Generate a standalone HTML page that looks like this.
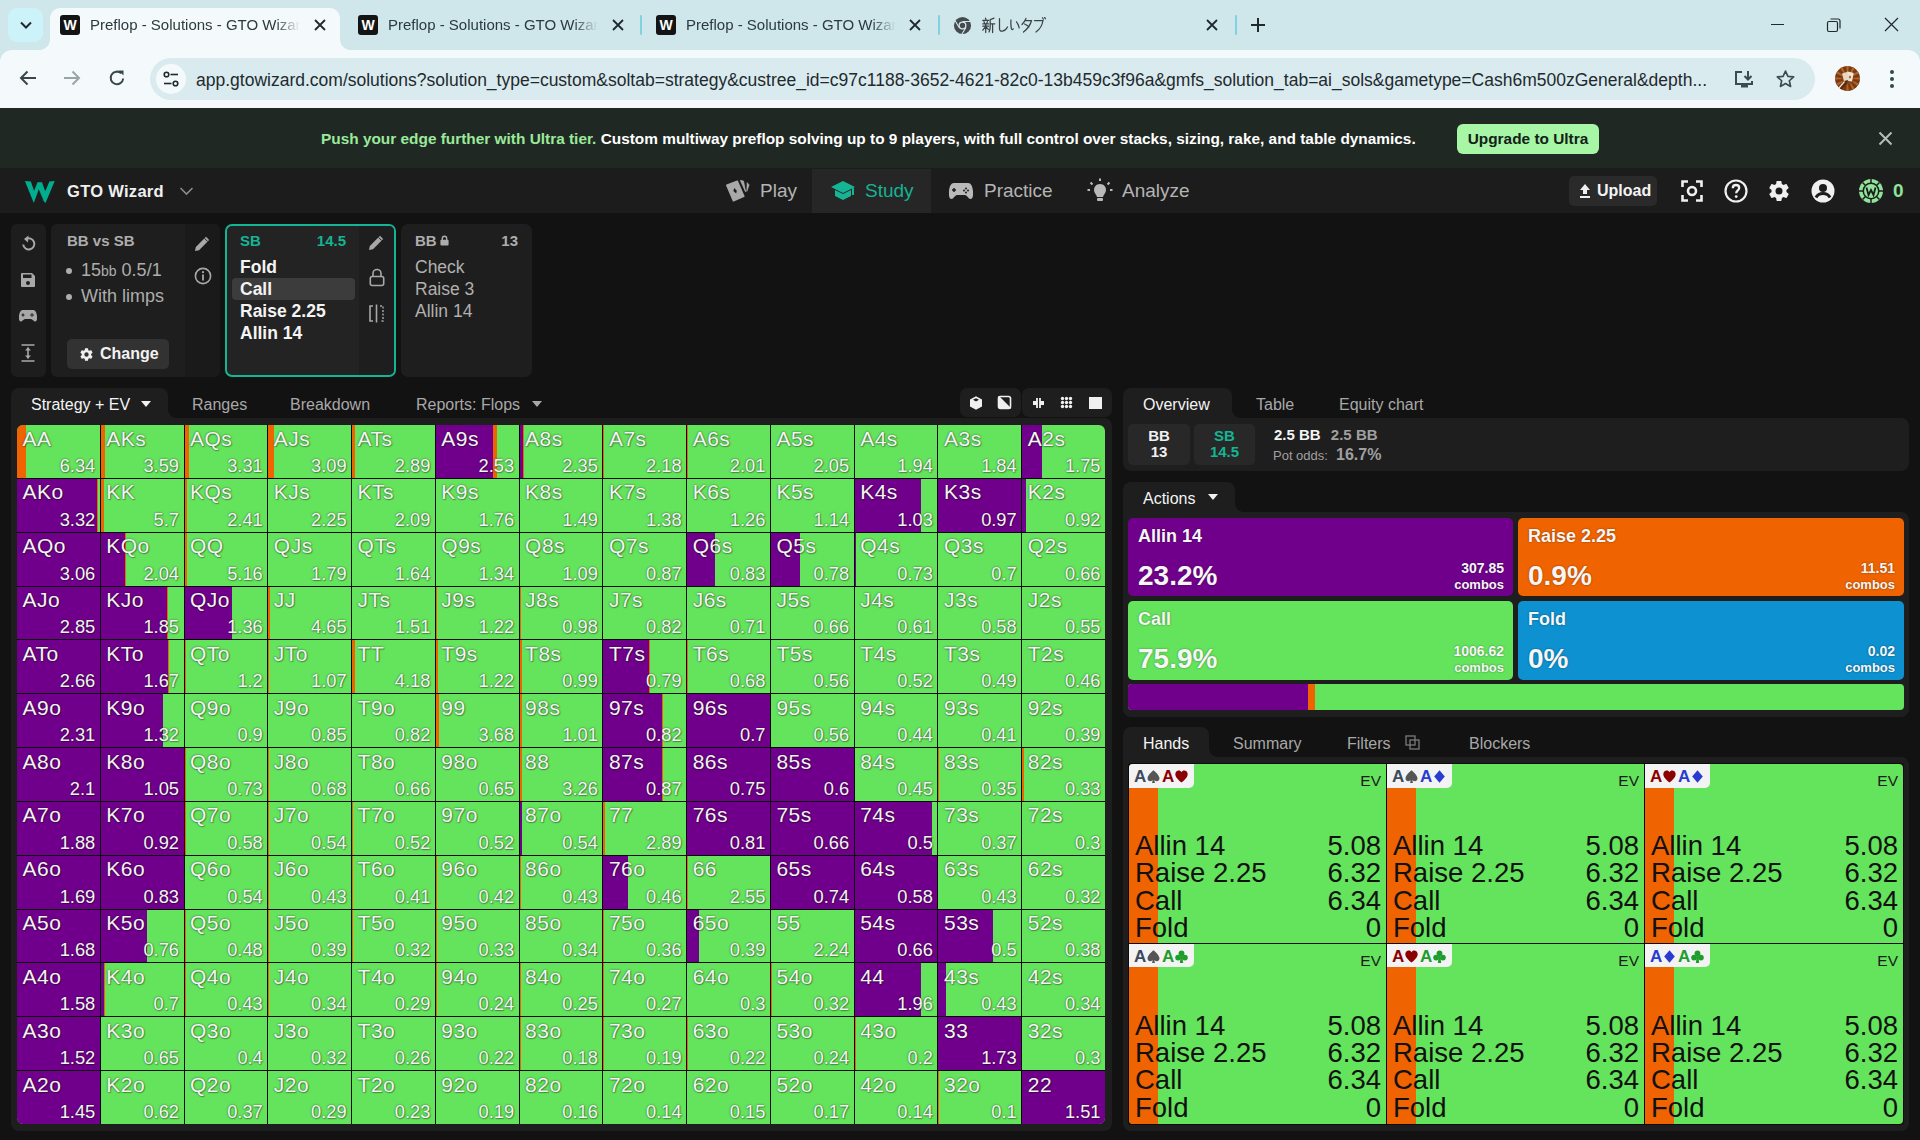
<!DOCTYPE html>
<html><head><meta charset="utf-8">
<style>
*{box-sizing:border-box;margin:0;padding:0}
html,body{width:1920px;height:1140px;overflow:hidden;background:#121212;font-family:"Liberation Sans",sans-serif}
.a{position:absolute}
svg{display:block}
/* chrome */
#tabbar{left:0;top:0;width:1920px;height:64px;background:#cfe6ea}
#toolbar{left:0;top:50px;width:1920px;height:58px;background:#f4fafb}
.tabt{font-size:15px;color:#2b3a3f;white-space:nowrap;overflow:hidden}
#banner{left:0;top:108px;width:1920px;height:60px;background:#1f2822}
#nav{left:0;top:168px;width:1920px;height:45px;background:#1c1c1c}
.navt{font-size:19px;color:#b4b4b4;top:178px;line-height:26px}
.panel{background:#1e1e1e}
/* grid */
#grid{left:17px;top:425px;width:1088px;height:699px;background:#0b0b0b;display:grid;grid-template-columns:repeat(13,1fr);grid-template-rows:repeat(13,1fr);gap:1px;border-radius:6px;overflow:hidden}
.c{position:relative;background:#64e35c;overflow:hidden}
.c i{position:absolute;top:0;bottom:0;left:0}
.c .p{background:#70008b}
.c .o{background:#ef6300}
.c b{position:absolute;left:5.5px;top:0.5px;font-weight:normal;font-size:21px;letter-spacing:0.5px;color:#f4f4f4;text-shadow:0 0 2px rgba(0,0,0,.6),1px 1px 1px rgba(0,0,0,.25);line-height:26px}
.c u{position:absolute;right:4.5px;bottom:1px;text-decoration:none;font-size:18.3px;letter-spacing:0;color:#f4f4f4;text-shadow:0 0 2px rgba(0,0,0,.6),1px 1px 1px rgba(0,0,0,.25);line-height:22px}
</style></head><body>
<div id="tabbar" class="a"></div>
<!-- tab dropdown -->
<div class="a" style="left:8px;top:8px;width:35px;height:34px;border-radius:9px;background:#cdf3fa"></div>
<svg class="a" style="left:19px;top:19px" width="14" height="12" viewBox="0 0 14 12"><path d="M2 3.5 L7 8.5 L12 3.5" stroke="#1f2a2e" stroke-width="2" fill="none"/></svg>
<!-- active tab -->
<div class="a" style="left:50px;top:8px;width:290px;height:44px;background:#f4fafb;border-radius:10px 10px 0 0"></div>
<div class="a" style="left:40px;top:40px;width:10px;height:10px;background:radial-gradient(circle at 0 0,#cfe6ea 9.5px,#f4fafb 10px)"></div>
<div class="a" style="left:340px;top:40px;width:10px;height:10px;background:radial-gradient(circle at 100% 0,#cfe6ea 9.5px,#f4fafb 10px)"></div>
<!-- favicons -->
<div class="a" style="left:60px;top:15px;width:20px;height:20px;background:#141414;border-radius:3px;color:#fff;font:bold 14px 'Liberation Sans';text-align:center;line-height:20px">W</div>
<div class="a" style="left:358px;top:15px;width:20px;height:20px;background:#141414;border-radius:3px;color:#fff;font:bold 14px 'Liberation Sans';text-align:center;line-height:20px">W</div>
<div class="a" style="left:656px;top:15px;width:20px;height:20px;background:#141414;border-radius:3px;color:#fff;font:bold 14px 'Liberation Sans';text-align:center;line-height:20px">W</div>
<div class="a tabt" style="left:90px;top:15px;width:210px;line-height:20px;-webkit-mask-image:linear-gradient(90deg,#000 88%,transparent)">Preflop - Solutions - GTO Wizard</div>
<div class="a tabt" style="left:388px;top:15px;width:210px;line-height:20px;-webkit-mask-image:linear-gradient(90deg,#000 88%,transparent)">Preflop - Solutions - GTO Wizard</div>
<div class="a tabt" style="left:686px;top:15px;width:210px;line-height:20px;-webkit-mask-image:linear-gradient(90deg,#000 88%,transparent)">Preflop - Solutions - GTO Wizard</div>
<svg class="a" style="left:313px;top:18px" width="14" height="14" viewBox="0 0 14 14"><path d="M2 2L12 12M12 2L2 12" stroke="#1f2a2e" stroke-width="1.8"/></svg>
<svg class="a" style="left:611px;top:18px" width="14" height="14" viewBox="0 0 14 14"><path d="M2 2L12 12M12 2L2 12" stroke="#1f2a2e" stroke-width="1.8"/></svg>
<svg class="a" style="left:908px;top:18px" width="14" height="14" viewBox="0 0 14 14"><path d="M2 2L12 12M12 2L2 12" stroke="#1f2a2e" stroke-width="1.8"/></svg>
<svg class="a" style="left:1205px;top:18px" width="14" height="14" viewBox="0 0 14 14"><path d="M2 2L12 12M12 2L2 12" stroke="#1f2a2e" stroke-width="1.8"/></svg>
<div class="a" style="left:640px;top:15px;width:2px;height:20px;background:#7dd3e0;border-radius:1px"></div>
<div class="a" style="left:938px;top:15px;width:2px;height:20px;background:#7dd3e0;border-radius:1px"></div>
<div class="a" style="left:1235px;top:15px;width:2px;height:20px;background:#7dd3e0;border-radius:1px"></div>
<svg class="a" style="left:953px;top:16px" width="19" height="19" viewBox="0 0 20 20"><circle cx="10" cy="10" r="9" fill="#454a4d"/><circle cx="10" cy="10" r="4.2" fill="#cfe6ea"/><circle cx="10" cy="10" r="2.8" fill="#454a4d"/><path d="M10 5.8 L18.5 5.8 M6.4 12.1 L2.3 5 M13.6 12.1 L9.4 19" stroke="#cfe6ea" stroke-width="1.2"/></svg>
<svg class="a" style="left:982px;top:17px" width="64" height="17" viewBox="0 0 64 17" fill="none" stroke="#3b4346" stroke-width="1.25" stroke-linecap="round"><path d="M3.5 1.2 L4 2.6 M0.8 3.4 H6.6 M2 4.6 L2.6 6.2 M5.4 4.6 L4.8 6.2 M0.8 6.8 H6.6 M0.8 9.2 H6.6 M3.7 7 V15.5 M3.6 9.6 L0.8 13.2 M3.8 9.6 L6.4 12.4 M12 1.2 L8.2 2.6 V9.5 Q8.2 13 7 15 M8.2 6.8 H12.8 M10.6 6.8 V15.5"/><path d="M17.5 1.5 V11.5 Q17.5 14.5 20.5 14.2 Q23.5 13.8 25.5 10"/><path d="M29 3 Q28.6 8 29.4 11.5 Q30 13.5 31.2 11.8 M34.5 4.8 Q36.5 7.5 37.2 11"/><path d="M44 1.5 Q42.5 5 40 7.5 M43.3 3.5 H49.5 Q48 10 41.5 15 M42.6 7 Q45 8 47 9.8"/><path d="M52.5 3.5 H61 Q59.8 11 54 15 M60.5 0.8 L61.3 2.2 M62.6 0.4 L63.4 1.8"/></svg>
<svg class="a" style="left:1250px;top:17px" width="16" height="16" viewBox="0 0 16 16"><path d="M8 1V15M1 8H15" stroke="#1f2a2e" stroke-width="2"/></svg>
<!-- window controls -->
<div class="a" style="left:1771px;top:24px;width:13px;height:1.3px;background:#1f2a2e"></div>
<svg class="a" style="left:1826px;top:17px" width="16" height="16" viewBox="0 0 16 16"><rect x="1.5" y="4.5" width="10" height="10" rx="1.5" fill="none" stroke="#1f2a2e" stroke-width="1.2"/><path d="M4.5 2 H12 a2 2 0 0 1 2 2 V11.5" fill="none" stroke="#1f2a2e" stroke-width="1.2"/></svg>
<svg class="a" style="left:1884px;top:17px" width="15" height="15" viewBox="0 0 15 15"><path d="M1 1L14 14M14 1L1 14" stroke="#1f2a2e" stroke-width="1.2"/></svg>
<!-- toolbar -->
<div id="toolbar" class="a" style="border-radius:12px 12px 0 0"></div>
<div class="a" style="left:0;top:108px;width:1920px;height:1px;background:#2a2f30"></div>
<svg class="a" style="left:18px;top:69px" width="20" height="18" viewBox="0 0 20 18"><path d="M18 9H3M9.5 2.5L3 9L9.5 15.5" stroke="#37474b" stroke-width="2" fill="none"/></svg>
<svg class="a" style="left:62px;top:69px" width="20" height="18" viewBox="0 0 20 18"><path d="M2 9H17M10.5 2.5L17 9L10.5 15.5" stroke="#9aa3a6" stroke-width="2" fill="none"/></svg>
<svg class="a" style="left:107px;top:68px" width="20" height="20" viewBox="0 0 20 20"><path d="M16.2 10.5 A6.3 6.3 0 1 1 14.3 5.4" stroke="#37474b" stroke-width="2" fill="none"/><path d="M11.5 2.5 H16.5 V7.5 Z" fill="#37474b"/></svg>
<div class="a" style="left:150px;top:58px;width:1665px;height:42px;background:#d9ebee;border-radius:21px"></div>
<div class="a" style="left:156px;top:64px;width:30px;height:30px;background:#f4fafb;border-radius:50%"></div>
<svg class="a" style="left:162px;top:70px" width="18" height="18" viewBox="0 0 18 18"><circle cx="4.5" cy="4.5" r="2.3" fill="none" stroke="#1f2a2e" stroke-width="1.6"/><path d="M8.5 4.5H16" stroke="#1f2a2e" stroke-width="1.6"/><circle cx="13.5" cy="13.5" r="2.3" fill="none" stroke="#1f2a2e" stroke-width="1.6"/><path d="M2 13.5H9.5" stroke="#1f2a2e" stroke-width="1.6"/></svg>
<div class="a" style="left:196px;top:68px;font-size:17.5px;line-height:24px;color:#1f2a2e;white-space:nowrap">app.gtowizard.com/solutions?solution_type=custom&amp;soltab=strategy&amp;custree_id=c97c1188-3652-4621-82c0-13b459c3f96a&amp;gmfs_solution_tab=ai_sols&amp;gametype=Cash6m500zGeneral&amp;depth...</div>
<svg class="a" style="left:1734px;top:70px" width="22" height="20" viewBox="0 0 22 20"><path d="M8 2H2V14H18V11" stroke="#3d4a4e" stroke-width="2" fill="none"/><path d="M14 1V9M10.5 6L14 9.5L17.5 6" stroke="#3d4a4e" stroke-width="2" fill="none"/><rect x="7" y="15" width="7" height="2.5" fill="#3d4a4e"/></svg>
<svg class="a" style="left:1775px;top:69px" width="21" height="20" viewBox="0 0 24 24"><path d="M12 2.5l2.9 6.3 6.9.7-5.2 4.6 1.5 6.8L12 17.4 5.9 20.9l1.5-6.8L2.2 9.5l6.9-.7z" fill="none" stroke="#3d4a4e" stroke-width="2" stroke-linejoin="round"/></svg>
<svg class="a" style="left:1835px;top:66px" width="25" height="25" viewBox="0 0 25 25"><defs><clipPath id="av"><circle cx="12.5" cy="12.5" r="12.5"/></clipPath></defs><g clip-path="url(#av)"><rect width="25" height="25" fill="#7a3a12"/><path d="M12.5 12.5 L25.43 11.14 L25.43 13.86 Z" fill="#b0652c"/><path d="M12.5 12.5 L24.38 17.79 L23.02 20.14 Z" fill="#b0652c"/><path d="M12.5 12.5 L20.14 23.02 L17.79 24.38 Z" fill="#b0652c"/><path d="M12.5 12.5 L13.86 25.43 L11.14 25.43 Z" fill="#b0652c"/><path d="M12.5 12.5 L7.21 24.38 L4.86 23.02 Z" fill="#b0652c"/><path d="M12.5 12.5 L1.98 20.14 L0.62 17.79 Z" fill="#b0652c"/><path d="M12.5 12.5 L-0.43 13.86 L-0.43 11.14 Z" fill="#b0652c"/><path d="M12.5 12.5 L0.62 7.21 L1.98 4.86 Z" fill="#b0652c"/><path d="M12.5 12.5 L4.86 1.98 L7.21 0.62 Z" fill="#b0652c"/><path d="M12.5 12.5 L11.14 -0.43 L13.86 -0.43 Z" fill="#b0652c"/><path d="M12.5 12.5 L17.79 0.62 L20.14 1.98 Z" fill="#b0652c"/><path d="M12.5 12.5 L23.02 4.86 L24.38 7.21 Z" fill="#b0652c"/><circle cx="12.5" cy="12.5" r="6" fill="#8a4418"/><rect x="11" y="6" width="7" height="9" rx="0.8" fill="#f1e4d2" transform="rotate(12 14.5 10.5)"/><rect x="8" y="6.5" width="6" height="8.5" rx="0.8" fill="#e8d8c0" transform="rotate(-14 11 11)"/><path d="M3 23 L9 15 L13 14 L12 17 L6 25Z" fill="#5a2a0c"/><path d="M4 22 L9.5 15.5" stroke="#f1e4d2" stroke-width="1.2"/><path d="M15 9.5 l1 1.6 -1 1.6 -1 -1.6z" fill="#7a3a12"/></g></svg>
<svg class="a" style="left:1887px;top:69px" width="10" height="20" viewBox="0 0 10 20"><circle cx="5" cy="3" r="2" fill="#2f4a50"/><circle cx="5" cy="10" r="2" fill="#2f4a50"/><circle cx="5" cy="17" r="2" fill="#2f4a50"/></svg>
<div id="banner" class="a"></div>
<div class="a" style="left:321px;top:129px;font-weight:bold;font-size:15.4px;line-height:20px;white-space:nowrap;color:#fff"><span style="color:#9be99b">Push your edge further with Ultra tier.</span> Custom multiway preflop solving up to 9 players, with full control over stacks, sizing, rake, and table dynamics.</div>
<div class="a" style="left:1457px;top:124px;width:142px;height:30px;background:#a6f6a6;border-radius:6px;color:#142018;font-weight:bold;font-size:15.4px;line-height:30px;text-align:center">Upgrade to Ultra</div>
<svg class="a" style="left:1878px;top:131px" width="15" height="15" viewBox="0 0 15 15"><path d="M1.5 1.5L13.5 13.5M13.5 1.5L1.5 13.5" stroke="#b8bdb9" stroke-width="2"/></svg>
<div id="nav" class="a"></div>
<svg class="a" style="left:20px;top:175px" width="40" height="35" viewBox="0 0 40 35"><path d="M4.9 6 L10.9 6.6 L14.1 16 L17.5 7.2 L22 7.2 L25.2 16.3 L29.4 6.4 L34.7 6 L25.5 27.9 L22.8 25.3 L18.6 15 L13.8 27.9 Z" fill="#00ae8f"/><path d="M18.4 14.6 L23.2 25.6" stroke="#1c1c1c" stroke-width="0.9"/></svg>
<div class="a" style="left:67px;top:180px;font-weight:bold;font-size:16.5px;line-height:22px;color:#f0f0f0;letter-spacing:0.3px">GTO Wizard</div>
<svg class="a" style="left:179px;top:186px" width="15" height="10" viewBox="0 0 15 10"><path d="M1.5 2L7.5 8L13.5 2" stroke="#8a8a8a" stroke-width="1.6" fill="none"/></svg>
<div class="a" style="left:812px;top:169px;width:119px;height:44px;background:#262626"></div>
<svg class="a" style="left:720px;top:172px" width="40" height="38" viewBox="0 0 40 38"><path d="M6.8 13.2 L17.3 9.2 L23.8 24.3 L13.4 28.7 Z" fill="#a9a9a9" stroke="#a9a9a9" stroke-width="1.6" stroke-linejoin="round"/><path d="M20.4 8.4 L23.5 9.1 L25.6 19.8 Z" fill="#a9a9a9" stroke="#a9a9a9" stroke-width="0.8" stroke-linejoin="round"/><path d="M27.1 10.6 L29.2 12.9 L26.8 19.4 Z" fill="#a9a9a9" stroke="#a9a9a9" stroke-width="0.6" stroke-linejoin="round"/><path d="M14.2 16 L16.8 18.8 L16.2 21.6 L13.4 18.9 Z" fill="#1c1c1c"/></svg>
<div class="a navt" style="left:760px">Play</div>
<svg class="a" style="left:830px;top:180px" width="26" height="22" viewBox="0 0 26 22"><path d="M13 1 L25 7 L13 13 L1 7 Z" fill="#14b494"/><path d="M5 10 V16 L13 20 L21 16 V10 L13 14 Z" fill="#14b494"/><path d="M23 8 V15" stroke="#14b494" stroke-width="2"/></svg>
<div class="a navt" style="left:865px;color:#14b494">Study</div>
<svg class="a" style="left:949px;top:182px" width="24" height="18" viewBox="0 0 24 18"><path d="M5 1 H19 C22 1 23.5 4 24 9 C24.5 14 23.5 17 21.5 17 C19.5 17 18 13 16 13 H8 C6 13 4.5 17 2.5 17 C0.5 17 -0.5 14 0 9 C0.5 4 2 1 5 1Z" fill="#b9b9b9"/><path d="M5 6V10M3 8H7" stroke="#1c1c1c" stroke-width="1.5"/><circle cx="17" cy="6.5" r="1" fill="#1c1c1c"/><circle cx="19" cy="8.5" r="1" fill="#1c1c1c"/><circle cx="15" cy="8.5" r="1" fill="#1c1c1c"/><circle cx="17" cy="10.5" r="1" fill="#1c1c1c"/></svg>
<div class="a navt" style="left:984px">Practice</div>
<svg class="a" style="left:1087px;top:178px" width="26" height="26" viewBox="0 0 26 26"><path d="M13 6 C9 6 7 9 7 12 C7 15 9.5 16.5 10 19 H16 C16.5 16.5 19 15 19 12 C19 9 17 6 13 6Z" fill="#b9b9b9"/><rect x="10" y="20" width="6" height="3" rx="1" fill="#b9b9b9"/><path d="M13 0.5V3M3.5 4.5L5.5 6.5M22.5 4.5L20.5 6.5M0.5 12H3M23 12H25.5" stroke="#b9b9b9" stroke-width="2"/></svg>
<div class="a navt" style="left:1122px">Analyze</div>
<div class="a" style="left:1569px;top:176px;width:88px;height:30px;background:#2a2a2a;border-radius:5px"></div>
<svg class="a" style="left:1579px;top:183px" width="12" height="16" viewBox="0 0 12 16"><path d="M6 1 L11 7 H8 V11 H4 V7 H1 Z" fill="#f0f0f0"/><rect x="1" y="13" width="10" height="2" fill="#f0f0f0"/></svg>
<div class="a" style="left:1597px;top:180px;font-size:16px;line-height:22px;color:#f4f4f4;font-weight:bold">Upload</div>
<svg class="a" style="left:1681px;top:180px" width="22" height="22" viewBox="0 0 22 22"><path d="M1.5 7V1.5H7M15 1.5H20.5V7M20.5 15V20.5H15M7 20.5H1.5V15" stroke="#f0f0f0" stroke-width="2.6" fill="none"/><circle cx="11" cy="11" r="4" stroke="#f0f0f0" stroke-width="2.6" fill="none"/></svg>
<svg class="a" style="left:1724px;top:179px" width="24" height="24" viewBox="0 0 24 24"><circle cx="12" cy="12" r="10.5" stroke="#f0f0f0" stroke-width="2.2" fill="none"/><path d="M8.8 9.2 C8.8 7.2 10.3 6 12 6 C13.8 6 15.2 7.2 15.2 9 C15.2 11.3 12.2 11.5 12.2 14.2" stroke="#f0f0f0" stroke-width="2.3" fill="none"/><circle cx="12.2" cy="17.6" r="1.4" fill="#f0f0f0"/></svg>
<svg class="a" style="left:1767px;top:179px" width="24" height="24" viewBox="0 0 24 24"><path fill="#f0f0f0" d="M19.4 13c.04-.3.06-.66.06-1s-.02-.7-.07-1l2.1-1.65c.2-.15.24-.42.12-.64l-2-3.46c-.12-.22-.39-.3-.61-.22l-2.49 1c-.52-.4-1.08-.73-1.69-.98l-.38-2.65A.49.49 0 0 0 14 2h-4c-.25 0-.46.18-.49.42l-.38 2.65c-.61.25-1.17.59-1.69.98l-2.49-1c-.23-.09-.49 0-.61.22l-2 3.46c-.13.22-.07.49.12.64L4.57 11c-.04.3-.07.67-.07 1s.02.7.07 1l-2.11 1.65c-.19.15-.24.42-.12.64l2 3.46c.12.22.39.3.61.22l2.49-1c.52.4 1.08.73 1.69.98l.38 2.65c.03.24.24.42.49.42h4c.25 0 .46-.18.49-.42l.38-2.65c.61-.25 1.17-.59 1.69-.98l2.49 1c.23.09.49 0 .61-.22l2-3.46c.12-.22.07-.49-.12-.64L19.4 13zM12 15.5A3.5 3.5 0 1 1 12 8.5a3.5 3.5 0 0 1 0 7z"/><circle cx="12" cy="12" r="2.2" fill="none" stroke="#f0f0f0" stroke-width="0"/></svg>
<svg class="a" style="left:1811px;top:179px" width="24" height="24" viewBox="0 0 24 24"><circle cx="12" cy="12" r="11.5" fill="#f0f0f0"/><circle cx="12" cy="9" r="4" fill="#1c1c1c"/><path d="M5 18.5 C6.5 15.5 9 14.5 12 14.5 C15 14.5 17.5 15.5 19 18.5" stroke="#1c1c1c" stroke-width="3" fill="none"/></svg>
<svg class="a" style="left:1858px;top:178px" width="26" height="26" viewBox="0 0 26 26"><circle cx="13" cy="13" r="12" fill="#8fe39a"/><circle cx="13" cy="13" r="8.5" fill="#1c1c1c"/><circle cx="13" cy="13" r="7" fill="#8fe39a"/><path d="M13 1V5M13 21V25M1 13H5M21 13H25M4.5 4.5L7.3 7.3M18.7 18.7L21.5 21.5M21.5 4.5L18.7 7.3M7.3 18.7L4.5 21.5" stroke="#1c1c1c" stroke-width="1.5"/><path d="M8.5 9.5L10.5 17L13 12L15.5 17L17.5 9.5" stroke="#1c1c1c" stroke-width="1.8" fill="none"/></svg>
<div class="a" style="left:1893px;top:180px;font-size:19px;font-weight:bold;line-height:22px;color:#8fe39a">0</div>
<!-- left icon strip -->
<div class="a panel" style="left:11px;top:224px;width:35px;height:153px;border-radius:6px;background:#1d1d1d"></div>
<svg class="a" style="left:20px;top:235px" width="17" height="17" viewBox="0 0 17 17"><path d="M3.2 9.5 A5.6 5.6 0 1 0 6 4" stroke="#a8a8a8" stroke-width="2" fill="none" stroke-dasharray="30 2.5"/><path d="M8.5 0.5 L4 4 L8 7.5 Z" fill="#a8a8a8"/></svg>
<svg class="a" style="left:20px;top:272px" width="16" height="16" viewBox="0 0 16 16"><path d="M1 2 a1 1 0 0 1 1-1 H12 L15 4 V14 a1 1 0 0 1 -1 1 H2 a1 1 0 0 1 -1-1Z" fill="#a8a8a8"/><rect x="3" y="2.5" width="8.5" height="3.5" fill="#1d1d1d"/><circle cx="8" cy="11" r="2" fill="#1d1d1d"/></svg>
<svg class="a" style="left:19px;top:309px" width="18" height="13" viewBox="0 0 18 13"><path d="M4 1 H14 C16.5 1 17.5 3.5 18 7 C18.5 10.5 17.5 12.5 16 12.5 C14.5 12.5 13.5 10 12 10 H6 C4.5 10 3.5 12.5 2 12.5 C0.5 12.5 -0.5 10.5 0 7 C0.5 3.5 1.5 1 4 1Z" fill="#a8a8a8"/><path d="M4 4.5V7.5M2.5 6H5.5" stroke="#1d1d1d" stroke-width="1.2"/><circle cx="13" cy="5" r=".8" fill="#1d1d1d"/><circle cx="13" cy="7" r=".8" fill="#1d1d1d"/><circle cx="12" cy="6" r=".8" fill="#1d1d1d"/><circle cx="14" cy="6" r=".8" fill="#1d1d1d"/></svg>
<svg class="a" style="left:21px;top:344px" width="14" height="18" viewBox="0 0 14 18"><path d="M0.5 1H13.5M0.5 17H13.5" stroke="#a8a8a8" stroke-width="1.6"/><path d="M7 3.5V14.5" stroke="#a8a8a8" stroke-width="1.6"/><path d="M4 6.5L7 3.2L10 6.5ZM4 11.5L7 14.8L10 11.5Z" fill="#a8a8a8"/></svg>
<!-- BB vs SB card -->
<div class="a" style="left:51px;top:224px;width:169px;height:153px;border-radius:6px;background:#1e1e1e;overflow:hidden"><div class="a" style="left:134px;top:0;width:35px;height:153px;background:#1a1a1a"></div></div>
<div class="a" style="left:67px;top:232px;font-weight:bold;font-size:15px;line-height:18px;color:#adadad">BB vs SB</div>
<div class="a" style="left:66px;top:268px;width:6px;height:6px;border-radius:50%;background:#adadad"></div>
<div class="a" style="left:81px;top:258px;font-size:18px;line-height:24px;color:#adadad;white-space:nowrap">15<span style="font-size:14px">bb</span> 0.5/1</div>
<div class="a" style="left:66px;top:294px;width:6px;height:6px;border-radius:50%;background:#adadad"></div>
<div class="a" style="left:81px;top:284px;font-size:18px;line-height:24px;color:#adadad;white-space:nowrap">With limps</div>
<div class="a" style="left:67px;top:339px;width:102px;height:30px;border-radius:5px;background:#323232"></div>
<svg class="a" style="left:79px;top:347px" width="15" height="15" viewBox="0 0 24 24"><path fill="#f0f0f0" d="M19.4 13c.04-.3.06-.66.06-1s-.02-.7-.07-1l2.1-1.65c.2-.15.24-.42.12-.64l-2-3.46c-.12-.22-.39-.3-.61-.22l-2.49 1c-.52-.4-1.08-.73-1.69-.98l-.38-2.65A.49.49 0 0 0 14 2h-4c-.25 0-.46.18-.49.42l-.38 2.65c-.61.25-1.17.59-1.69.98l-2.49-1c-.23-.09-.49 0-.61.22l-2 3.46c-.13.22-.07.49.12.64L4.57 11c-.04.3-.07.67-.07 1s.02.7.07 1l-2.11 1.65c-.19.15-.24.42-.12.64l2 3.46c.12.22.39.3.61.22l2.49-1c.52.4 1.08.73 1.69.98l.38 2.65c.03.24.24.42.49.42h4c.25 0 .46-.18.49-.42l.38-2.65c.61-.25 1.17-.59 1.69-.98l2.49 1c.23.09.49 0 .61-.22l2-3.46c.12-.22.07-.49-.12-.64L19.4 13zM12 15.5A3.5 3.5 0 1 1 12 8.5a3.5 3.5 0 0 1 0 7z"/></svg>
<div class="a" style="left:100px;top:344px;font-weight:bold;font-size:16px;line-height:20px;color:#f2f2f2">Change</div>
<svg class="a" style="left:194px;top:235px" width="17" height="17" viewBox="0 0 17 17"><path d="M1 16 L1.8 12 L12 1.8 L15.2 5 L5 15.2 Z" fill="#a8a8a8"/><path d="M10.5 3.3 L13.7 6.5" stroke="#1a1a1a" stroke-width="1"/></svg>
<svg class="a" style="left:194px;top:267px" width="18" height="18" viewBox="0 0 18 18"><circle cx="9" cy="9" r="7.6" stroke="#a8a8a8" stroke-width="1.6" fill="none"/><rect x="8.1" y="7.5" width="1.8" height="6" fill="#a8a8a8"/><circle cx="9" cy="5.2" r="1.1" fill="#a8a8a8"/></svg>
<!-- SB card -->
<div class="a" style="left:225px;top:224px;width:171px;height:153px;border-radius:7px;border:2px solid #14b494;background:#232323;overflow:hidden"><div class="a" style="left:132px;top:0;width:37px;height:149px;background:#1e1e1e"></div></div>
<div class="a" style="left:240px;top:232px;font-weight:bold;font-size:15px;line-height:18px;color:#14b494">SB</div>
<div class="a" style="left:296px;top:232px;width:50px;text-align:right;font-weight:bold;font-size:15px;line-height:18px;color:#14b494">14.5</div>
<div class="a" style="left:232px;top:278px;width:123px;height:22px;border-radius:4px;background:#3c3c3c"></div>
<div class="a" style="left:240px;top:256px;font-weight:bold;font-size:17.5px;line-height:22px;color:#f4f4f4;white-space:nowrap">Fold<br>Call<br>Raise 2.25<br>Allin 14</div>
<svg class="a" style="left:368px;top:234px" width="17" height="17" viewBox="0 0 17 17"><path d="M1 16 L1.8 12 L12 1.8 L15.2 5 L5 15.2 Z" fill="#a8a8a8"/><path d="M10.5 3.3 L13.7 6.5" stroke="#1e1e1e" stroke-width="1"/></svg>
<svg class="a" style="left:369px;top:268px" width="16" height="19" viewBox="0 0 16 19"><path d="M4 8.5V5.5a4 4 0 0 1 8 0V8.5" stroke="#a8a8a8" stroke-width="1.6" fill="none"/><rect x="1.3" y="8.5" width="13.4" height="9" rx="2" stroke="#a8a8a8" stroke-width="1.6" fill="none"/></svg>
<svg class="a" style="left:368px;top:304px" width="17" height="19" viewBox="0 0 17 19"><path d="M5 2H2V17H5" stroke="#a8a8a8" stroke-width="1.6" fill="none"/><path d="M8.5 0.5V18.5" stroke="#a8a8a8" stroke-width="1.6"/><path d="M12 2H15V17H12" stroke="#a8a8a8" stroke-width="1.4" fill="none" stroke-dasharray="2 1.5"/></svg>
<!-- BB card -->
<div class="a" style="left:401px;top:224px;width:131px;height:153px;border-radius:7px;background:#1e1e1e"></div>
<div class="a" style="left:415px;top:232px;font-weight:bold;font-size:15px;line-height:18px;color:#adadad">BB</div>
<svg class="a" style="left:440px;top:234.5px" width="9" height="11" viewBox="0 0 11 13"><path d="M2.8 6V4a2.7 2.7 0 0 1 5.4 0V6" stroke="#adadad" stroke-width="1.6" fill="none"/><rect x="0.5" y="5.5" width="10" height="7" rx="1.2" fill="#adadad"/></svg>
<div class="a" style="left:468px;top:232px;width:50px;text-align:right;font-weight:bold;font-size:15px;line-height:18px;color:#adadad">13</div>
<div class="a" style="left:415px;top:256px;font-size:17.5px;line-height:22px;color:#b0b0b0;white-space:nowrap">Check<br>Raise 3<br>Allin 14</div>
<!-- strategy tabs -->
<div class="a" style="left:11px;top:388px;width:157px;height:32px;border-radius:8px 8px 0 0;background:#1e1e1e"></div>
<div class="a" style="left:168px;top:410px;width:8px;height:8px;background:radial-gradient(circle at 100% 0,#121212 7.5px,#1e1e1e 8px)"></div>
<div class="a" style="left:11px;top:418px;width:1101px;height:713px;border-radius:0 8px 8px 8px;background:#1e1e1e"></div>
<div class="a" style="left:31px;top:394.5px;font-size:16px;line-height:20px;color:#f4f4f4;white-space:nowrap">Strategy + EV</div>
<svg class="a" style="left:141px;top:400.5px" width="10" height="6" viewBox="0 0 10 6"><path d="M0 0H10L5 6Z" fill="#f0f0f0"/></svg>
<div class="a" style="left:192px;top:394.5px;font-size:16px;line-height:20px;color:#a8a8a8">Ranges</div>
<div class="a" style="left:290px;top:394.5px;font-size:16px;line-height:20px;color:#a8a8a8">Breakdown</div>
<div class="a" style="left:416px;top:394.5px;font-size:16px;line-height:20px;color:#a8a8a8;white-space:nowrap">Reports: Flops</div>
<svg class="a" style="left:532px;top:400.5px" width="10" height="6" viewBox="0 0 10 6"><path d="M0 0H10L5 6Z" fill="#a8a8a8"/></svg>
<!-- toggles -->
<div class="a" style="left:960px;top:388px;width:61px;height:29px;border-radius:7px;background:#1e1e1e"></div>
<div class="a" style="left:1022px;top:388px;width:90px;height:29px;border-radius:7px;background:#1e1e1e"></div>
<svg class="a" style="left:969px;top:396px" width="14" height="14" viewBox="0 0 14 14"><path d="M7 0.3 L13 3.5 V10.5 L7 13.7 L1 10.5 V3.5 Z" fill="#f0f0f0"/><path d="M7 2.2 L10 3.8 L7 5.4 L4 3.8Z" fill="#1e1e1e"/></svg>
<svg class="a" style="left:997px;top:395px" width="15" height="15" viewBox="0 0 15 15"><rect x="1.5" y="1.5" width="12" height="12" rx="2" fill="none" stroke="#f0f0f0" stroke-width="1.6"/><path d="M1.5 1.5 L13.5 13.5 H3.5 a2 2 0 0 1 -2 -2Z" fill="#f0f0f0"/><path d="M1.5 1.5 L13.5 13.5" stroke="#f0f0f0" stroke-width="1.4"/></svg>
<svg class="a" style="left:1032px;top:397px" width="13" height="12" viewBox="0 0 13 12"><path d="M5 1V5H1M8 1V5H12M5 11V7H1M8 11V7H12" stroke="#f0f0f0" stroke-width="1.8" fill="none"/></svg>
<svg class="a" style="left:1060px;top:396px" width="13" height="13" viewBox="0 0 13 13"><g fill="#f0f0f0"><circle cx="2.5" cy="2.5" r="1.7"/><circle cx="6.5" cy="2.5" r="1.7"/><circle cx="10.5" cy="2.5" r="1.7"/><circle cx="2.5" cy="6.5" r="1.7"/><circle cx="6.5" cy="6.5" r="1.7"/><circle cx="10.5" cy="6.5" r="1.7"/><circle cx="2.5" cy="10.5" r="1.7"/><circle cx="6.5" cy="10.5" r="1.7"/><circle cx="10.5" cy="10.5" r="1.7"/></g></svg>
<div class="a" style="left:1089px;top:397px;width:12.5px;height:11.5px;background:#f0f0f0"></div>
<!-- Overview -->
<div class="a" style="left:1123px;top:388px;width:109px;height:32px;border-radius:8px 8px 0 0;background:#1e1e1e"></div>
<div class="a" style="left:1232px;top:410px;width:8px;height:8px;background:radial-gradient(circle at 100% 0,#121212 7.5px,#1e1e1e 8px)"></div>
<div class="a" style="left:1123px;top:418px;width:786px;height:53px;border-radius:0 8px 8px 8px;background:#1e1e1e"></div>
<div class="a" style="left:1143px;top:394.5px;font-size:16px;line-height:20px;color:#f4f4f4">Overview</div>
<div class="a" style="left:1256px;top:394.5px;font-size:16px;line-height:20px;color:#a8a8a8">Table</div>
<div class="a" style="left:1339px;top:394.5px;font-size:16px;line-height:20px;color:#a8a8a8;white-space:nowrap">Equity chart</div>
<div class="a" style="left:1128px;top:424px;width:62px;height:41px;border-radius:5px;background:#282828;text-align:center;font-weight:bold;font-size:15px;line-height:16px;color:#f0f0f0;padding-top:4px">BB<br>13</div>
<div class="a" style="left:1194px;top:424px;width:61px;height:41px;border-radius:5px;background:#282828;text-align:center;font-weight:bold;font-size:15px;line-height:16px;color:#14b494;padding-top:4px">SB<br>14.5</div>
<div class="a" style="left:1274px;top:426px;font-weight:bold;font-size:15px;line-height:18px;color:#f4f4f4;white-space:nowrap">2.5 BB <span style="color:#a0a0a0;margin-left:6px">2.5 BB</span></div>
<div class="a" style="left:1273px;top:447px;font-size:13px;line-height:18px;color:#a0a0a0;white-space:nowrap">Pot odds:</div>
<div class="a" style="left:1336px;top:446px;font-weight:bold;font-size:16px;line-height:18px;color:#a0a0a0">16.7%</div>
<!-- Actions -->
<div class="a" style="left:1123px;top:482px;width:112px;height:32px;border-radius:8px 8px 0 0;background:#1e1e1e"></div>
<div class="a" style="left:1235px;top:504px;width:8px;height:8px;background:radial-gradient(circle at 100% 0,#121212 7.5px,#1e1e1e 8px)"></div>
<div class="a" style="left:1123px;top:512px;width:786px;height:205px;border-radius:0 8px 8px 8px;background:#1e1e1e"></div>
<div class="a" style="left:1143px;top:488.5px;font-size:16px;line-height:20px;color:#f4f4f4">Actions</div>
<svg class="a" style="left:1208px;top:494px" width="10" height="6" viewBox="0 0 10 6"><path d="M0 0H10L5 6Z" fill="#f0f0f0"/></svg>
<div class="a ab" style="left:1128px;top:518px;width:385px;height:78px;background:#70008b"></div>
<div class="a ab" style="left:1518px;top:518px;width:386px;height:78px;background:#ef6300"></div>
<div class="a ab" style="left:1128px;top:601px;width:385px;height:79px;background:#64e35c"></div>
<div class="a ab" style="left:1518px;top:601px;width:386px;height:79px;background:#0d91d0"></div>
<div class="a" style="left:1128px;top:684px;width:776px;height:26px;border-radius:4px;overflow:hidden;background:#64e35c"><div class="a" style="left:0;top:0;width:180px;height:26px;background:#70008b"></div><div class="a" style="left:180px;top:0;width:7px;height:26px;background:#ef6300"></div></div>
<!-- Hands -->
<div class="a" style="left:1123px;top:727px;width:86px;height:32px;border-radius:8px 8px 0 0;background:#1e1e1e"></div>
<div class="a" style="left:1209px;top:749px;width:8px;height:8px;background:radial-gradient(circle at 100% 0,#121212 7.5px,#1e1e1e 8px)"></div>
<div class="a" style="left:1123px;top:757px;width:786px;height:374px;border-radius:0 8px 8px 8px;background:#1e1e1e"></div>
<div class="a" style="left:1143px;top:733.5px;font-size:16px;line-height:20px;color:#f4f4f4">Hands</div>
<div class="a" style="left:1233px;top:733.5px;font-size:16px;line-height:20px;color:#a8a8a8">Summary</div>
<div class="a" style="left:1347px;top:733.5px;font-size:16px;line-height:20px;color:#a8a8a8">Filters</div>
<svg class="a" style="left:1405px;top:735px" width="15" height="15" viewBox="0 0 15 15"><rect x="1" y="1" width="9" height="9" fill="none" stroke="#7a7a7a" stroke-width="1.3"/><rect x="5" y="5" width="9" height="9" fill="none" stroke="#7a7a7a" stroke-width="1.3"/></svg>
<div class="a" style="left:1469px;top:733.5px;font-size:16px;line-height:20px;color:#a8a8a8">Blockers</div>
<div class="a" style="left:1128px;top:763px;width:776px;height:362px;background:#0b0b0b;border-radius:3px"></div>
<style>
.abt{color:#f6f6f6;text-shadow:0 0 2px rgba(0,0,0,.45);white-space:nowrap}
.ab{border-radius:5px}
.hc{background:#64e35c;overflow:hidden}
.hcl{font-size:18px;line-height:22px;white-space:nowrap;letter-spacing:-0.5px}
.hct{font-size:27.5px;line-height:27.4px;color:#111;white-space:nowrap}
</style>
<div id="grid" class="a"><div class="c"><i class="o" style="left:0px;width:9px"></i><b>AA</b><u>6.34</u></div><div class="c"><i class="o" style="left:0px;width:4.5px"></i><b>AKs</b><u>3.59</u></div><div class="c"><i class="o" style="left:0px;width:4px"></i><b>AQs</b><u>3.31</u></div><div class="c"><i class="o" style="left:0px;width:6px"></i><b>AJs</b><u>3.09</u></div><div class="c"><i class="o" style="left:0px;width:3px"></i><b>ATs</b><u>2.89</u></div><div class="c"><i class="p" style="width:57px"></i><i class="o" style="left:57px;width:4px"></i><b>A9s</b><u>2.53</u></div><div class="c"><i class="p" style="width:3px"></i><i class="o" style="left:3px;width:1.5px"></i><b>A8s</b><u>2.35</u></div><div class="c"><i class="o" style="left:0px;width:0.7px"></i><b>A7s</b><u>2.18</u></div><div class="c"><i class="o" style="left:0px;width:0.5px"></i><b>A6s</b><u>2.01</u></div><div class="c"><b>A5s</b><u>2.05</u></div><div class="c"><b>A4s</b><u>1.94</u></div><div class="c"><b>A3s</b><u>1.84</u></div><div class="c"><i class="p" style="width:20px"></i><b>A2s</b><u>1.75</u></div><div class="c"><i class="p" style="width:80px"></i><i class="o" style="left:80px;width:1px"></i><b>AKo</b><u>3.32</u></div><div class="c"><i class="o" style="left:0px;width:3.6px"></i><b>KK</b><u>5.7</u></div><div class="c"><i class="o" style="left:0px;width:2.8px"></i><b>KQs</b><u>2.41</u></div><div class="c"><b>KJs</b><u>2.25</u></div><div class="c"><b>KTs</b><u>2.09</u></div><div class="c"><b>K9s</b><u>1.76</u></div><div class="c"><b>K8s</b><u>1.49</u></div><div class="c"><b>K7s</b><u>1.38</u></div><div class="c"><b>K6s</b><u>1.26</u></div><div class="c"><b>K5s</b><u>1.14</u></div><div class="c"><i class="p" style="width:66px"></i><b>K4s</b><u>1.03</u></div><div class="c"><i class="p" style="width:83px"></i><b>K3s</b><u>0.97</u></div><div class="c"><i class="p" style="width:4px"></i><b>K2s</b><u>0.92</u></div><div class="c"><i class="p" style="width:83px"></i><b>AQo</b><u>3.06</u></div><div class="c"><i class="p" style="width:24px"></i><i class="o" style="left:24px;width:1px"></i><b>KQo</b><u>2.04</u></div><div class="c"><i class="o" style="left:0px;width:2px"></i><b>QQ</b><u>5.16</u></div><div class="c"><b>QJs</b><u>1.79</u></div><div class="c"><b>QTs</b><u>1.64</u></div><div class="c"><b>Q9s</b><u>1.34</u></div><div class="c"><b>Q8s</b><u>1.09</u></div><div class="c"><b>Q7s</b><u>0.87</u></div><div class="c"><i class="p" style="width:28px"></i><b>Q6s</b><u>0.83</u></div><div class="c"><i class="p" style="width:29px"></i><b>Q5s</b><u>0.78</u></div><div class="c"><i class="p" style="width:1px"></i><b>Q4s</b><u>0.73</u></div><div class="c"><b>Q3s</b><u>0.7</u></div><div class="c"><b>Q2s</b><u>0.66</u></div><div class="c"><i class="p" style="width:83px"></i><b>AJo</b><u>2.85</u></div><div class="c"><i class="p" style="width:66px"></i><i class="o" style="left:66px;width:1px"></i><b>KJo</b><u>1.85</u></div><div class="c"><i class="p" style="width:47.5px"></i><b>QJo</b><u>1.36</u></div><div class="c"><i class="o" style="left:0px;width:1.5px"></i><b>JJ</b><u>4.65</u></div><div class="c"><b>JTs</b><u>1.51</u></div><div class="c"><i class="o" style="left:0px;width:1px"></i><b>J9s</b><u>1.22</u></div><div class="c"><i class="o" style="left:0px;width:1px"></i><b>J8s</b><u>0.98</u></div><div class="c"><b>J7s</b><u>0.82</u></div><div class="c"><b>J6s</b><u>0.71</u></div><div class="c"><b>J5s</b><u>0.66</u></div><div class="c"><b>J4s</b><u>0.61</u></div><div class="c"><b>J3s</b><u>0.58</u></div><div class="c"><b>J2s</b><u>0.55</u></div><div class="c"><i class="p" style="width:83px"></i><b>ATo</b><u>2.66</u></div><div class="c"><i class="p" style="width:67px"></i><i class="o" style="left:67px;width:1px"></i><b>KTo</b><u>1.67</u></div><div class="c"><i class="o" style="left:0px;width:1px"></i><b>QTo</b><u>1.2</u></div><div class="c"><i class="o" style="left:0px;width:1px"></i><b>JTo</b><u>1.07</u></div><div class="c"><i class="o" style="left:0px;width:2.5px"></i><b>TT</b><u>4.18</u></div><div class="c"><i class="o" style="left:0px;width:2.5px"></i><b>T9s</b><u>1.22</u></div><div class="c"><i class="o" style="left:0px;width:2.5px"></i><b>T8s</b><u>0.99</u></div><div class="c"><i class="p" style="width:46px"></i><i class="o" style="left:46px;width:0.5px"></i><b>T7s</b><u>0.79</u></div><div class="c"><i class="o" style="left:0px;width:0.5px"></i><b>T6s</b><u>0.68</u></div><div class="c"><b>T5s</b><u>0.56</u></div><div class="c"><b>T4s</b><u>0.52</u></div><div class="c"><b>T3s</b><u>0.49</u></div><div class="c"><b>T2s</b><u>0.46</u></div><div class="c"><i class="p" style="width:83px"></i><b>A9o</b><u>2.31</u></div><div class="c"><i class="p" style="width:62px"></i><b>K9o</b><u>1.32</u></div><div class="c"><b>Q9o</b><u>0.9</u></div><div class="c"><b>J9o</b><u>0.85</u></div><div class="c"><b>T9o</b><u>0.82</u></div><div class="c"><i class="o" style="left:0px;width:3px"></i><b>99</b><u>3.68</u></div><div class="c"><i class="o" style="left:0px;width:2px"></i><b>98s</b><u>1.01</u></div><div class="c"><i class="p" style="width:59px"></i><i class="o" style="left:59px;width:1px"></i><b>97s</b><u>0.82</u></div><div class="c"><i class="p" style="width:82.5px"></i><b>96s</b><u>0.7</u></div><div class="c"><b>95s</b><u>0.56</u></div><div class="c"><b>94s</b><u>0.44</u></div><div class="c"><b>93s</b><u>0.41</u></div><div class="c"><b>92s</b><u>0.39</u></div><div class="c"><i class="p" style="width:83px"></i><b>A8o</b><u>2.1</u></div><div class="c"><i class="p" style="width:83px"></i><b>K8o</b><u>1.05</u></div><div class="c"><i class="o" style="left:0px;width:1px"></i><b>Q8o</b><u>0.73</u></div><div class="c"><i class="o" style="left:0px;width:0.5px"></i><b>J8o</b><u>0.68</u></div><div class="c"><b>T8o</b><u>0.66</u></div><div class="c"><b>98o</b><u>0.65</u></div><div class="c"><i class="o" style="left:0px;width:2.5px"></i><b>88</b><u>3.26</u></div><div class="c"><i class="p" style="width:59px"></i><i class="o" style="left:59px;width:1px"></i><b>87s</b><u>0.87</u></div><div class="c"><i class="p" style="width:83px"></i><b>86s</b><u>0.75</u></div><div class="c"><i class="p" style="width:83px"></i><b>85s</b><u>0.6</u></div><div class="c"><b>84s</b><u>0.45</u></div><div class="c"><i class="o" style="left:0px;width:1px"></i><b>83s</b><u>0.35</u></div><div class="c"><i class="o" style="left:0px;width:2px"></i><b>82s</b><u>0.33</u></div><div class="c"><i class="p" style="width:83px"></i><b>A7o</b><u>1.88</u></div><div class="c"><i class="p" style="width:83px"></i><b>K7o</b><u>0.92</u></div><div class="c"><i class="o" style="left:0px;width:1px"></i><b>Q7o</b><u>0.58</u></div><div class="c"><i class="o" style="left:0px;width:0.5px"></i><b>J7o</b><u>0.54</u></div><div class="c"><i class="o" style="left:0px;width:0.5px"></i><b>T7o</b><u>0.52</u></div><div class="c"><b>97o</b><u>0.52</u></div><div class="c"><i class="p" style="width:2px"></i><b>87o</b><u>0.54</u></div><div class="c"><i class="o" style="left:0px;width:2px"></i><b>77</b><u>2.89</u></div><div class="c"><i class="p" style="width:83px"></i><b>76s</b><u>0.81</u></div><div class="c"><i class="p" style="width:83px"></i><b>75s</b><u>0.66</u></div><div class="c"><i class="p" style="width:77px"></i><b>74s</b><u>0.5</u></div><div class="c"><b>73s</b><u>0.37</u></div><div class="c"><b>72s</b><u>0.3</u></div><div class="c"><i class="p" style="width:83px"></i><b>A6o</b><u>1.69</u></div><div class="c"><i class="p" style="width:83px"></i><b>K6o</b><u>0.83</u></div><div class="c"><b>Q6o</b><u>0.54</u></div><div class="c"><i class="o" style="left:0px;width:1px"></i><b>J6o</b><u>0.43</u></div><div class="c"><i class="o" style="left:0px;width:0.5px"></i><b>T6o</b><u>0.41</u></div><div class="c"><i class="o" style="left:0px;width:0.5px"></i><b>96o</b><u>0.42</u></div><div class="c"><i class="o" style="left:0px;width:0.5px"></i><b>86o</b><u>0.43</u></div><div class="c"><i class="p" style="width:25px"></i><b>76o</b><u>0.46</u></div><div class="c"><i class="o" style="left:0px;width:1px"></i><b>66</b><u>2.55</u></div><div class="c"><i class="p" style="width:83px"></i><b>65s</b><u>0.74</u></div><div class="c"><i class="p" style="width:83px"></i><b>64s</b><u>0.58</u></div><div class="c"><b>63s</b><u>0.43</u></div><div class="c"><b>62s</b><u>0.32</u></div><div class="c"><i class="p" style="width:83px"></i><b>A5o</b><u>1.68</u></div><div class="c"><i class="p" style="width:46px"></i><b>K5o</b><u>0.76</u></div><div class="c"><i class="o" style="left:0px;width:0.5px"></i><b>Q5o</b><u>0.48</u></div><div class="c"><i class="o" style="left:0px;width:1px"></i><b>J5o</b><u>0.39</u></div><div class="c"><i class="o" style="left:0px;width:0.5px"></i><b>T5o</b><u>0.32</u></div><div class="c"><i class="o" style="left:0px;width:0.5px"></i><b>95o</b><u>0.33</u></div><div class="c"><b>85o</b><u>0.34</u></div><div class="c"><i class="o" style="left:0px;width:0.5px"></i><b>75o</b><u>0.36</u></div><div class="c"><i class="p" style="width:12px"></i><b>65o</b><u>0.39</u></div><div class="c"><b>55</b><u>2.24</u></div><div class="c"><i class="p" style="width:83px"></i><b>54s</b><u>0.66</u></div><div class="c"><i class="p" style="width:55px"></i><b>53s</b><u>0.5</u></div><div class="c"><b>52s</b><u>0.38</u></div><div class="c"><i class="p" style="width:83px"></i><b>A4o</b><u>1.58</u></div><div class="c"><i class="p" style="width:3.5px"></i><i class="o" style="left:3.5px;width:0.5px"></i><b>K4o</b><u>0.7</u></div><div class="c"><i class="o" style="left:0px;width:0.5px"></i><b>Q4o</b><u>0.43</u></div><div class="c"><i class="o" style="left:0px;width:0.5px"></i><b>J4o</b><u>0.34</u></div><div class="c"><b>T4o</b><u>0.29</u></div><div class="c"><i class="o" style="left:0px;width:0.5px"></i><b>94o</b><u>0.24</u></div><div class="c"><i class="o" style="left:0px;width:0.5px"></i><b>84o</b><u>0.25</u></div><div class="c"><i class="o" style="left:0px;width:0.5px"></i><b>74o</b><u>0.27</u></div><div class="c"><b>64o</b><u>0.3</u></div><div class="c"><i class="o" style="left:0px;width:0.5px"></i><b>54o</b><u>0.32</u></div><div class="c"><i class="p" style="width:66px"></i><b>44</b><u>1.96</u></div><div class="c"><i class="p" style="width:8px"></i><b>43s</b><u>0.43</u></div><div class="c"><b>42s</b><u>0.34</u></div><div class="c"><i class="p" style="width:83px"></i><b>A3o</b><u>1.52</u></div><div class="c"><b>K3o</b><u>0.65</u></div><div class="c"><b>Q3o</b><u>0.4</u></div><div class="c"><b>J3o</b><u>0.32</u></div><div class="c"><b>T3o</b><u>0.26</u></div><div class="c"><b>93o</b><u>0.22</u></div><div class="c"><i class="o" style="left:0px;width:0.5px"></i><b>83o</b><u>0.18</u></div><div class="c"><i class="o" style="left:0px;width:0.5px"></i><b>73o</b><u>0.19</u></div><div class="c"><i class="o" style="left:0px;width:0.5px"></i><b>63o</b><u>0.22</u></div><div class="c"><b>53o</b><u>0.24</u></div><div class="c"><i class="o" style="left:0px;width:0.5px"></i><b>43o</b><u>0.2</u></div><div class="c"><i class="p" style="width:83px"></i><b>33</b><u>1.73</u></div><div class="c"><b>32s</b><u>0.3</u></div><div class="c"><i class="p" style="width:83px"></i><b>A2o</b><u>1.45</u></div><div class="c"><b>K2o</b><u>0.62</u></div><div class="c"><b>Q2o</b><u>0.37</u></div><div class="c"><b>J2o</b><u>0.29</u></div><div class="c"><b>T2o</b><u>0.23</u></div><div class="c"><b>92o</b><u>0.19</u></div><div class="c"><b>82o</b><u>0.16</u></div><div class="c"><b>72o</b><u>0.14</u></div><div class="c"><b>62o</b><u>0.15</u></div><div class="c"><b>52o</b><u>0.17</u></div><div class="c"><b>42o</b><u>0.14</u></div><div class="c"><i class="o" style="left:0px;width:0.5px"></i><b>32o</b><u>0.1</u></div><div class="c"><i class="p" style="width:83px"></i><b>22</b><u>1.51</u></div></div>
<div class="a abt" style="left:1128px;top:518px;width:385px;height:78px"><div class="a" style="left:10px;top:7px;font-weight:bold;font-size:18px;line-height:22px">Allin 14</div><div class="a" style="left:10px;top:41px;font-size:28px;line-height:34px;font-weight:bold">23.2%</div><div class="a" style="right:9px;top:42px;text-align:right;font-weight:bold;font-size:14px;line-height:16px">307.85<br><span style="font-size:13px;font-weight:bold">combos</span></div></div><div class="a abt" style="left:1518px;top:518px;width:386px;height:78px"><div class="a" style="left:10px;top:7px;font-weight:bold;font-size:18px;line-height:22px">Raise 2.25</div><div class="a" style="left:10px;top:41px;font-size:28px;line-height:34px;font-weight:bold">0.9%</div><div class="a" style="right:9px;top:42px;text-align:right;font-weight:bold;font-size:14px;line-height:16px">11.51<br><span style="font-size:13px;font-weight:bold">combos</span></div></div><div class="a abt" style="left:1128px;top:601px;width:385px;height:79px"><div class="a" style="left:10px;top:7px;font-weight:bold;font-size:18px;line-height:22px">Call</div><div class="a" style="left:10px;top:41px;font-size:28px;line-height:34px;font-weight:bold">75.9%</div><div class="a" style="right:9px;top:42px;text-align:right;font-weight:bold;font-size:14px;line-height:16px">1006.62<br><span style="font-size:13px;font-weight:bold">combos</span></div></div><div class="a abt" style="left:1518px;top:601px;width:386px;height:79px"><div class="a" style="left:10px;top:7px;font-weight:bold;font-size:18px;line-height:22px">Fold</div><div class="a" style="left:10px;top:41px;font-size:28px;line-height:34px;font-weight:bold">0%</div><div class="a" style="right:9px;top:42px;text-align:right;font-weight:bold;font-size:14px;line-height:16px">0.02<br><span style="font-size:13px;font-weight:bold">combos</span></div></div><div class="a hc" style="left:1129px;top:764px;width:257px;height:178.5px;border-radius:4px 0 0 0"><div class="a" style="left:0;top:0;width:29px;height:100%;background:#ef6300"></div><div class="a" style="left:0;top:0;width:65px;height:23.5px;background:#f3f3f3;border-radius:0 0 5px 0"></div><div class="a" style="left:5px;top:2px;font-weight:bold;font-size:17px;line-height:22px;color:#3d4a5c">A</div><svg class="a" style="left:18px;top:6px" width="13" height="13" viewBox="0 0 13 13" fill="#555"><path d="M6.5 0.3 C6.5 0.3 0.5 5.2 0.5 8.3 C0.5 10.1 1.8 11.3 3.4 11.3 C4.4 11.3 5.3 10.8 5.8 10.1 L5 13 H8 L7.2 10.1 C7.7 10.8 8.6 11.3 9.6 11.3 C11.2 11.3 12.5 10.1 12.5 8.3 C12.5 5.2 6.5 0.3 6.5 0.3Z"/></svg><div class="a" style="left:33px;top:2px;font-weight:bold;font-size:17px;line-height:22px;color:#8b0000">A</div><svg class="a" style="left:46px;top:6px" width="13" height="13" viewBox="0 0 13 13" fill="#8b0000"><path d="M6.5 12.5 C6.5 12.5 0.3 8.3 0.3 4.3 C0.3 2.1 1.9 0.5 3.8 0.5 C5 0.5 6 1.2 6.5 2.2 C7 1.2 8 0.5 9.2 0.5 C11.1 0.5 12.7 2.1 12.7 4.3 C12.7 8.3 6.5 12.5 6.5 12.5Z"/></svg><div class="a" style="right:5px;top:9px;font-size:15.5px;line-height:16px;color:#1a1a1a">EV</div><div class="a hct" style="left:6px;top:68px">Allin 14<br>Raise 2.25<br>Call<br>Fold</div><div class="a hct" style="right:5px;top:68px;text-align:right">5.08<br>6.32<br>6.34<br>0</div></div><div class="a hc" style="left:1387px;top:764px;width:257px;height:178.5px;border-radius:0"><div class="a" style="left:0;top:0;width:29px;height:100%;background:#ef6300"></div><div class="a" style="left:0;top:0;width:65px;height:23.5px;background:#f3f3f3;border-radius:0 0 5px 0"></div><div class="a" style="left:5px;top:2px;font-weight:bold;font-size:17px;line-height:22px;color:#3d4a5c">A</div><svg class="a" style="left:18px;top:6px" width="13" height="13" viewBox="0 0 13 13" fill="#555"><path d="M6.5 0.3 C6.5 0.3 0.5 5.2 0.5 8.3 C0.5 10.1 1.8 11.3 3.4 11.3 C4.4 11.3 5.3 10.8 5.8 10.1 L5 13 H8 L7.2 10.1 C7.7 10.8 8.6 11.3 9.6 11.3 C11.2 11.3 12.5 10.1 12.5 8.3 C12.5 5.2 6.5 0.3 6.5 0.3Z"/></svg><div class="a" style="left:33px;top:2px;font-weight:bold;font-size:17px;line-height:22px;color:#2a3bd0">A</div><svg class="a" style="left:46px;top:6px" width="13" height="13" viewBox="0 0 13 13" fill="#2a3bd0"><path d="M6.5 0.2 L11.8 6.5 L6.5 12.8 L1.2 6.5Z"/></svg><div class="a" style="right:5px;top:9px;font-size:15.5px;line-height:16px;color:#1a1a1a">EV</div><div class="a hct" style="left:6px;top:68px">Allin 14<br>Raise 2.25<br>Call<br>Fold</div><div class="a hct" style="right:5px;top:68px;text-align:right">5.08<br>6.32<br>6.34<br>0</div></div><div class="a hc" style="left:1645px;top:764px;width:258px;height:178.5px;border-radius:0 4px 0 0"><div class="a" style="left:0;top:0;width:29px;height:100%;background:#ef6300"></div><div class="a" style="left:0;top:0;width:65px;height:23.5px;background:#f3f3f3;border-radius:0 0 5px 0"></div><div class="a" style="left:5px;top:2px;font-weight:bold;font-size:17px;line-height:22px;color:#8b0000">A</div><svg class="a" style="left:18px;top:6px" width="13" height="13" viewBox="0 0 13 13" fill="#8b0000"><path d="M6.5 12.5 C6.5 12.5 0.3 8.3 0.3 4.3 C0.3 2.1 1.9 0.5 3.8 0.5 C5 0.5 6 1.2 6.5 2.2 C7 1.2 8 0.5 9.2 0.5 C11.1 0.5 12.7 2.1 12.7 4.3 C12.7 8.3 6.5 12.5 6.5 12.5Z"/></svg><div class="a" style="left:33px;top:2px;font-weight:bold;font-size:17px;line-height:22px;color:#2a3bd0">A</div><svg class="a" style="left:46px;top:6px" width="13" height="13" viewBox="0 0 13 13" fill="#2a3bd0"><path d="M6.5 0.2 L11.8 6.5 L6.5 12.8 L1.2 6.5Z"/></svg><div class="a" style="right:5px;top:9px;font-size:15.5px;line-height:16px;color:#1a1a1a">EV</div><div class="a hct" style="left:6px;top:68px">Allin 14<br>Raise 2.25<br>Call<br>Fold</div><div class="a hct" style="right:5px;top:68px;text-align:right">5.08<br>6.32<br>6.34<br>0</div></div><div class="a hc" style="left:1129px;top:943.5px;width:257px;height:180.5px;border-radius:0 0 0 4px"><div class="a" style="left:0;top:0;width:29px;height:100%;background:#ef6300"></div><div class="a" style="left:0;top:0;width:65px;height:23.5px;background:#f3f3f3;border-radius:0 0 5px 0"></div><div class="a" style="left:5px;top:2px;font-weight:bold;font-size:17px;line-height:22px;color:#3d4a5c">A</div><svg class="a" style="left:18px;top:6px" width="13" height="13" viewBox="0 0 13 13" fill="#555"><path d="M6.5 0.3 C6.5 0.3 0.5 5.2 0.5 8.3 C0.5 10.1 1.8 11.3 3.4 11.3 C4.4 11.3 5.3 10.8 5.8 10.1 L5 13 H8 L7.2 10.1 C7.7 10.8 8.6 11.3 9.6 11.3 C11.2 11.3 12.5 10.1 12.5 8.3 C12.5 5.2 6.5 0.3 6.5 0.3Z"/></svg><div class="a" style="left:33px;top:2px;font-weight:bold;font-size:17px;line-height:22px;color:#1f9d2b">A</div><svg class="a" style="left:46px;top:6px" width="13" height="13" viewBox="0 0 13 13" fill="#1f9d2b"><circle cx="6.5" cy="3.3" r="2.9"/><circle cx="3.1" cy="7.6" r="2.9"/><circle cx="9.9" cy="7.6" r="2.9"/><path d="M5.8 6 L4.8 13 H8.2 L7.2 6Z"/></svg><div class="a" style="right:5px;top:9px;font-size:15.5px;line-height:16px;color:#1a1a1a">EV</div><div class="a hct" style="left:6px;top:68px">Allin 14<br>Raise 2.25<br>Call<br>Fold</div><div class="a hct" style="right:5px;top:68px;text-align:right">5.08<br>6.32<br>6.34<br>0</div></div><div class="a hc" style="left:1387px;top:943.5px;width:257px;height:180.5px;border-radius:0"><div class="a" style="left:0;top:0;width:29px;height:100%;background:#ef6300"></div><div class="a" style="left:0;top:0;width:65px;height:23.5px;background:#f3f3f3;border-radius:0 0 5px 0"></div><div class="a" style="left:5px;top:2px;font-weight:bold;font-size:17px;line-height:22px;color:#8b0000">A</div><svg class="a" style="left:18px;top:6px" width="13" height="13" viewBox="0 0 13 13" fill="#8b0000"><path d="M6.5 12.5 C6.5 12.5 0.3 8.3 0.3 4.3 C0.3 2.1 1.9 0.5 3.8 0.5 C5 0.5 6 1.2 6.5 2.2 C7 1.2 8 0.5 9.2 0.5 C11.1 0.5 12.7 2.1 12.7 4.3 C12.7 8.3 6.5 12.5 6.5 12.5Z"/></svg><div class="a" style="left:33px;top:2px;font-weight:bold;font-size:17px;line-height:22px;color:#1f9d2b">A</div><svg class="a" style="left:46px;top:6px" width="13" height="13" viewBox="0 0 13 13" fill="#1f9d2b"><circle cx="6.5" cy="3.3" r="2.9"/><circle cx="3.1" cy="7.6" r="2.9"/><circle cx="9.9" cy="7.6" r="2.9"/><path d="M5.8 6 L4.8 13 H8.2 L7.2 6Z"/></svg><div class="a" style="right:5px;top:9px;font-size:15.5px;line-height:16px;color:#1a1a1a">EV</div><div class="a hct" style="left:6px;top:68px">Allin 14<br>Raise 2.25<br>Call<br>Fold</div><div class="a hct" style="right:5px;top:68px;text-align:right">5.08<br>6.32<br>6.34<br>0</div></div><div class="a hc" style="left:1645px;top:943.5px;width:258px;height:180.5px;border-radius:0 0 4px 0"><div class="a" style="left:0;top:0;width:29px;height:100%;background:#ef6300"></div><div class="a" style="left:0;top:0;width:65px;height:23.5px;background:#f3f3f3;border-radius:0 0 5px 0"></div><div class="a" style="left:5px;top:2px;font-weight:bold;font-size:17px;line-height:22px;color:#2a3bd0">A</div><svg class="a" style="left:18px;top:6px" width="13" height="13" viewBox="0 0 13 13" fill="#2a3bd0"><path d="M6.5 0.2 L11.8 6.5 L6.5 12.8 L1.2 6.5Z"/></svg><div class="a" style="left:33px;top:2px;font-weight:bold;font-size:17px;line-height:22px;color:#1f9d2b">A</div><svg class="a" style="left:46px;top:6px" width="13" height="13" viewBox="0 0 13 13" fill="#1f9d2b"><circle cx="6.5" cy="3.3" r="2.9"/><circle cx="3.1" cy="7.6" r="2.9"/><circle cx="9.9" cy="7.6" r="2.9"/><path d="M5.8 6 L4.8 13 H8.2 L7.2 6Z"/></svg><div class="a" style="right:5px;top:9px;font-size:15.5px;line-height:16px;color:#1a1a1a">EV</div><div class="a hct" style="left:6px;top:68px">Allin 14<br>Raise 2.25<br>Call<br>Fold</div><div class="a hct" style="right:5px;top:68px;text-align:right">5.08<br>6.32<br>6.34<br>0</div></div></body></html>
